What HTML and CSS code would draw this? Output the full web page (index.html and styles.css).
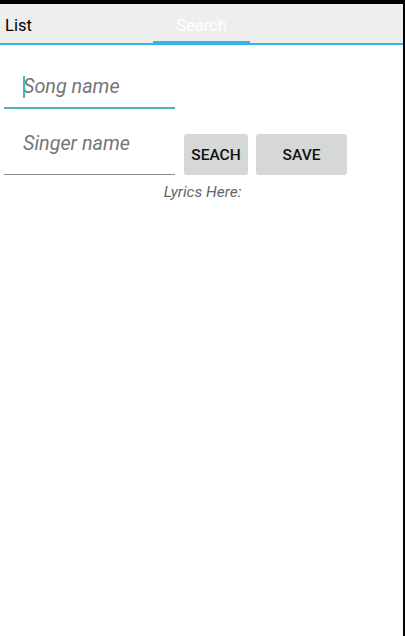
FILE: index.html
```html
<!DOCTYPE html>
<html>
<head>
<meta charset="utf-8">
<link rel="stylesheet" href="styles.css">
</head>
<body>
<div class="screen">
  <div class="topbar"></div>
  <div class="tabs">
    <div class="tab">List</div>
    <div class="tab active">Search</div>
  </div>
  <div class="content">
    <div class="field focused"><span class="cursor"></span><span class="hint">Song name</span></div>
    <div class="row">
      <div class="field"><span class="hint">Singer name</span></div>
      <button class="btn seach">SEACH</button>
      <button class="btn save">SAVE</button>
    </div>
    <div class="lyrics">Lyrics Here:</div>
  </div>
</div>
</body>
</html>
```
FILE: styles.css
```css
* { box-sizing: border-box; }
html, body { margin: 0; padding: 0; background: #fff; }
body { font-family: Roboto, "Noto Sans", sans-serif; }
.screen {
  width: 405px;
  height: 636px;
  border-right: 2px solid #000;
  display: flex;
  flex-direction: column;
  background: #fff;
}
.topbar { height: 4px; background: #000; }
.tabs {
  height: 41px;
  background: #eeeeee;
  border-bottom: 2px solid #33b5e5;
  display: flex;
  position: relative;
}
.tab {
  font-size: 16.5px;
  color: #000;
  padding: 13px 0 0 5px;
  line-height: 18px;
}
.tab.active {
  position: absolute;
  left: 153px;
  width: 97px;
  top: 0;
  height: 41px;
  padding: 13px 0 0 0;
  text-align: center;
  color: #fff;
  border-bottom: 4px solid #33b5e5;
}
.content { padding: 0 0 0 4px; }
.field {
  width: 171px;
  position: relative;
  border-bottom: 1px solid #8a8a8a;
  padding-left: 19px;
}
.field.focused {
  margin-top: 28px;
  height: 36px;
  border-bottom: 2px solid #4db6ac;
  padding-top: 1px;
}
.hint {
  font-style: italic;
  font-size: 19.8px;
  color: #767676;
  line-height: 26px;
}
.cursor {
  position: absolute;
  left: 19px;
  top: 3px;
  width: 2px;
  height: 22px;
  background: #4db6ac;
}
.row {
  display: flex;
  align-items: flex-end;
  margin-top: 0;
}
.row .field {
  height: 66px;
  padding-top: 22px;
}
.btn {
  border: none;
  background: #d6d7d7;
  border-radius: 3px;
  height: 41px;
  font-family: Roboto, sans-serif;
  font-size: 15.5px;
  font-weight: 500;
  color: #111;
  padding: 0;
  margin-bottom: 0;
}
.seach { width: 64px; margin-left: 9px; }
.save { width: 91px; margin-left: 8px; }
.lyrics {
  width: 397px;
  text-align: center;
  font-style: italic;
  font-size: 15.5px;
  color: #666;
  margin-top: 8px;
  line-height: 19px;
}
```
